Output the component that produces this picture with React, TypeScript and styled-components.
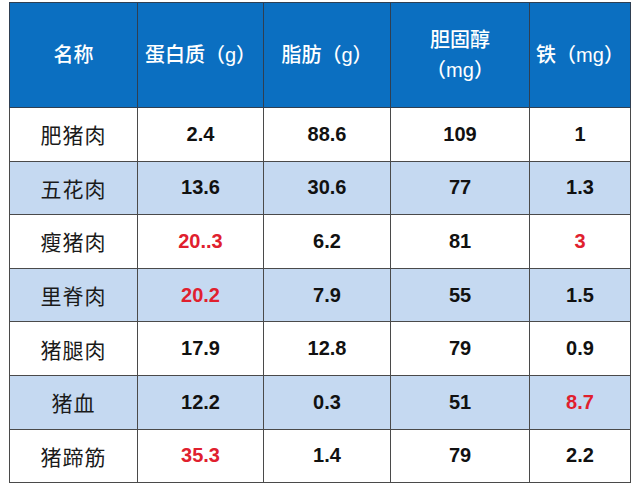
import styled, { createGlobalStyle } from 'styled-components'

const GlobalStyle = createGlobalStyle`
	html, body {
		margin: 0;
		padding: 0;
		background: #ffffff;
	}
	body {
		font-family: "Liberation Sans", "Noto Sans CJK SC", sans-serif;
	}
`

const Page = styled.div`
	width: 640px;
	height: 487px;
	padding: 2px 0 0 9px;
	box-sizing: border-box;
`

const Table = styled.table`
	border-collapse: collapse;
	table-layout: fixed;
	width: 621px;
`

const HeadCell = styled.th`
	height: 104px;
	padding: 0;
	background: #0b6fc1;
	color: #ffffff;
	font-family: "Liberation Sans", "Noto Sans CJK SC", sans-serif;
	font-size: 20px;
	font-weight: 500;
	line-height: 30px;
	text-align: center;
	border: 1.5px solid #2f3f52;
`

const Row = styled.tr<{ $shaded: boolean }>`
	background: ${p => (p.$shaded ? '#c5d9f1' : '#ffffff')};
`

const NameCell = styled.td`
	height: 52.6px;
	padding: 0;
	text-align: center;
	font-family: "Noto Sans CJK SC", sans-serif;
	font-size: 21px;
	font-weight: 400;
	letter-spacing: 1px;
	color: #1a1a1a;
	border: 1.5px solid #4a4a4a;
`

const ValueCell = styled.td<{ $red?: boolean }>`
	height: 52.6px;
	padding: 0;
	text-align: center;
	font-family: "Liberation Sans", sans-serif;
	font-size: 20px;
	font-weight: 700;
	color: ${p => (p.$red ? '#e0202e' : '#111111')};
	border: 1.5px solid #4a4a4a;
`

type Item = {
	name: string
	values: string[]
	red: number[]
}

const columns = [128, 126, 127, 139, 101]

const rows: Item[] = [
	{ name: '肥猪肉', values: ['2.4', '88.6', '109', '1'], red: [] },
	{ name: '五花肉', values: ['13.6', '30.6', '77', '1.3'], red: [] },
	{ name: '瘦猪肉', values: ['20..3', '6.2', '81', '3'], red: [0, 3] },
	{ name: '里脊肉', values: ['20.2', '7.9', '55', '1.5'], red: [0] },
	{ name: '猪腿肉', values: ['17.9', '12.8', '79', '0.9'], red: [] },
	{ name: '猪血', values: ['12.2', '0.3', '51', '8.7'], red: [3] },
	{ name: '猪蹄筋', values: ['35.3', '1.4', '79', '2.2'], red: [0] },
]

const App = () => (
	<>
		<GlobalStyle />
		<Page>
			<Table>
				<colgroup>
					{columns.map((w, i) => (
						<col key={i} style={{ width: `${w}px` }} />
					))}
				</colgroup>
				<thead>
					<tr>
						<HeadCell>名称</HeadCell>
						<HeadCell>蛋白质（g）</HeadCell>
						<HeadCell>脂肪（g）</HeadCell>
						<HeadCell>胆固醇<br />（mg）</HeadCell>
						<HeadCell>铁（mg）</HeadCell>
					</tr>
				</thead>
				<tbody>
					{rows.map((r, i) => (
						<Row key={r.name} $shaded={i % 2 === 1}>
							<NameCell>{r.name}</NameCell>
							{r.values.map((v, j) => (
								<ValueCell key={j} $red={r.red.includes(j)}>{v}</ValueCell>
							))}
						</Row>
					))}
				</tbody>
			</Table>
		</Page>
	</>
)

export default App
